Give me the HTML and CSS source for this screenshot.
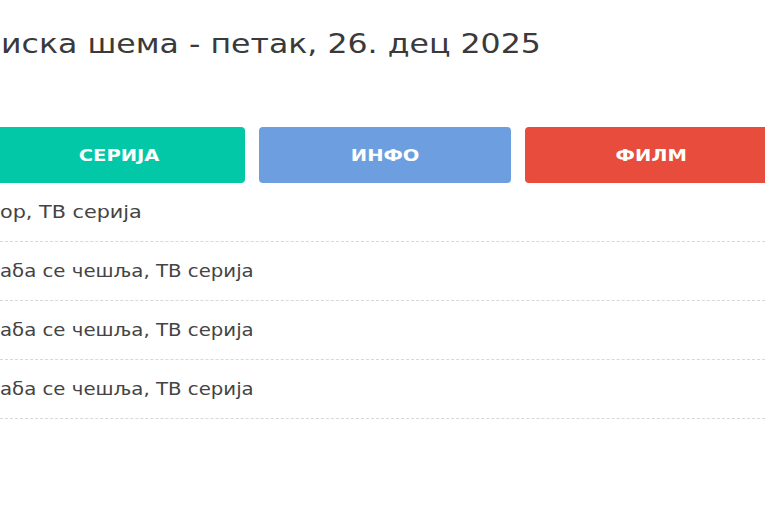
FILE: index.html
```html
<!DOCTYPE html>
<html lang="sr">
<head>
    <meta charset="UTF-8">
    <meta name="viewport" content="width=device-width, initial-scale=1.0">
    <title>Програмска шема</title>
    <link rel="stylesheet" href="styles.css">
</head>
<body>
    <div class="page">
        <h1 class="title"><span class="wide">иска шема - петак, 26. дец 2025</span></h1>

        <div class="filters">
            <button class="filter serija"><span class="wide">СЕРИЈА</span></button>
            <button class="filter info"><span class="wide">ИНФО</span></button>
            <button class="filter film"><span class="wide">ФИЛМ</span></button>
        </div>

        <ul class="schedule">
            <li class="show"><span class="wide first">ор, ТВ серија</span></li>
            <li class="show"><span class="wide">аба се чешља, ТВ серија</span></li>
            <li class="show"><span class="wide">аба се чешља, ТВ серија</span></li>
            <li class="show"><span class="wide">аба се чешља, ТВ серија</span></li>
        </ul>
    </div>
</body>
</html>
```

FILE: styles.css
```css
body {
    font-family: "DejaVu Sans", Verdana, sans-serif;
    background-color: #fff;
    margin: 0;
    overflow: hidden;
}
.page {
    padding-top: 25px;
}
/* the original renders its type noticeably wider than DejaVu */
.wide {
    display: inline-block;
    transform: scaleX(1.17);
    transform-origin: left center;
}
.title {
    margin: 0 0 0 1px;
    font-size: 27px;
    font-weight: 400;
    line-height: 38px;
    color: #3a3a3a;
    white-space: nowrap;
}
.filters {
    display: grid;
    grid-template-columns: repeat(3, 252px);
    gap: 14px;
    margin: 64px 0 0 -7px;
}
.filter {
    height: 56px;
    border: none;
    border-radius: 4px;
    color: #fff;
    font-family: "DejaVu Sans", Verdana, sans-serif;
    font-size: 16px;
    font-weight: 700;
    cursor: pointer;
}
.filter .wide {
    transform: scaleX(1.22);
    transform-origin: center;
}
.serija {
    background-color: #02c8a7;
}
.info {
    background-color: #6c9ee0;
}
.film {
    background-color: #e74c3c;
}
.schedule {
    list-style: none;
    margin: 0;
    padding: 0;
}
.show {
    height: 58px;
    line-height: 58px;
    border-bottom: 1px dashed #d8d8d8;
    font-size: 17px;
    color: #444;
    white-space: nowrap;
}
.show .wide {
    transform: scaleX(1.16);
}
.show .first {
    transform: scaleX(1.22);
}
```
